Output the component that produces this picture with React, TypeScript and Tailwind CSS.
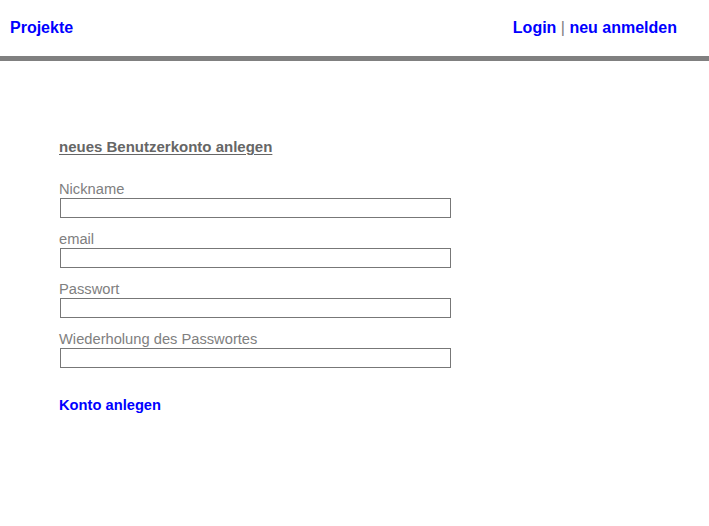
import React from 'react'

const FIELDS = [
  { label: 'Nickname', type: 'text' },
  { label: 'email', type: 'text' },
  { label: 'Passwort', type: 'password' },
  { label: 'Wiederholung des Passwortes', type: 'password' },
]

export default function App() {
  return (
    <div className="min-h-[526px] bg-white font-['Liberation_Sans',Arial,sans-serif]">
      {/* Header */}
      <div className="flex h-[56px] items-center justify-between pl-[10px] pr-[32px] text-[16px] font-bold">
        <a href="#" className="text-[#0000ff]">Projekte</a>
        <div className="text-[#0000ff]">
          <a href="#">Login</a>
          <span className="font-normal text-[#808080]"> | </span>
          <a href="#">neu anmelden</a>
        </div>
      </div>
      <div className="h-[5px] bg-[#808080]" />

      {/* Register form */}
      <div className="pl-[59px] pt-[77px]">
        <h2 className="text-[15px] leading-[18px] font-bold text-[#666666] underline underline-offset-[2px]">
          neues Benutzerkonto anlegen
        </h2>
        <div className="mt-[27px] flex flex-col gap-[15px]">
          {FIELDS.map(f => (
            <label key={f.label} className="block">
              <span className="block text-[14.7px] leading-[12px] text-[#808080] mb-[3px]">{f.label}</span>
              <input
                type={f.type}
                className="ml-[1px] block h-[20px] w-[391px] border border-[#777777] bg-white outline-none"
              />
            </label>
          ))}
        </div>
        <a href="#" className="mt-[28px] block text-[14.7px] leading-[18px] font-bold text-[#0000ff]">
          Konto anlegen
        </a>
      </div>
    </div>
  )
}
